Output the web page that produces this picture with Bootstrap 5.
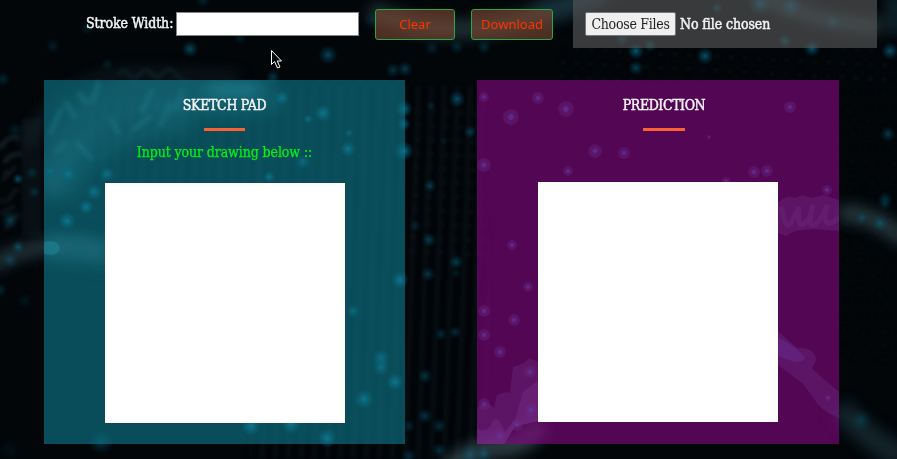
<!DOCTYPE html>
<html lang="en">
<head>
<meta charset="utf-8">
<meta name="viewport" content="width=device-width, initial-scale=1">
<title>Sketch Pad</title>
<link href="https://cdn.jsdelivr.net/npm/bootstrap@5.3.0/dist/css/bootstrap.min.css" rel="stylesheet">
<style>
body{background:#020609;color:#fff;font-family:"DejaVu Serif Condensed","DejaVu Serif",serif;font-stretch:condensed;font-size:14px;height:459px;overflow:hidden}
.backdrop{position:fixed;inset:0;z-index:-1}
.toolbar{height:48px;padding-left:86px}
.stroke-label,.file-name,.panel-title{color:#f4f4f4;-webkit-text-stroke:.45px currentColor}
.stroke-label{width:90px;white-space:nowrap;letter-spacing:-.1px;line-height:18px;padding-bottom:2px}
.stroke-input{width:183px;height:24px;border:1px solid #858585;background:#fff;padding:0 4px}
.tool-btn{height:31px;border:1px solid #28a745;border-radius:3px;background:rgba(128,74,50,.6);color:#ff3500;font:13px/1 "Noto Sans",sans-serif;padding:0}
.tool-btn:hover{border-color:#28a745;color:#ff3500}
.clear-btn{width:80px;margin-left:16px}
.download-btn{width:82px;margin-left:16px}
.upload-box{width:304px;height:48px;margin-left:20px;padding-left:12px;background:rgba(85,85,85,.66)}
.choose-btn{width:91px;height:24px;border:1px solid #777;border-radius:2px;background:#efefef;color:#222;padding:0;letter-spacing:-.28px;line-height:20px;white-space:nowrap}
.file-name{letter-spacing:-.1px;margin-left:4px}
.panels{padding:32px 0 0 44px;gap:72px}
.panel{height:364px;padding-top:16px}
.sketch{width:361px;background:rgba(14,115,133,.65)}
.predict{width:362px;background:rgba(126,6,125,.65)}
.panel-title{font-size:14px;line-height:18px;margin:0;font-weight:400;letter-spacing:-.32px}
.predict .panel-title{letter-spacing:-.42px}
.rule{width:41px;height:3px;margin-top:14px;background:#fa6135}
.predict .rule{width:42px}
.predict-heading{margin-left:12px}
.hint{height:18px;line-height:18px;margin-top:12px;color:#00f315;letter-spacing:-.1px;white-space:nowrap;-webkit-text-stroke:.25px currentColor}
.pad{display:block;width:240px;height:240px;background:#fff;margin-top:22px}
.predict .pad{margin-top:51px}
.pointer{position:absolute;left:271px;top:49px}
</style>
<script src="https://cdn.jsdelivr.net/npm/bootstrap@5.3.0/dist/js/bootstrap.bundle.min.js"></script>
</head>
<body>
<svg class="backdrop" width="897" height="459" viewBox="0 0 897 459" aria-hidden="true">
  <defs>
    <radialGradient id="glow"><stop offset="0" stop-color="#087c9d"/><stop offset=".4" stop-color="#075b77" stop-opacity=".7"/><stop offset="1" stop-color="#05455c" stop-opacity="0"/></radialGradient>
    <radialGradient id="violet"><stop offset="0" stop-color="#40a0ee"/><stop offset=".34" stop-color="#3680c5" stop-opacity=".9"/><stop offset=".4" stop-color="#4079a0" stop-opacity=".55"/><stop offset="1" stop-color="#40658a" stop-opacity=".45"/></radialGradient>
    <pattern id="mesh" width="14" height="14" patternUnits="userSpaceOnUse" patternTransform="rotate(3)"><circle cx="5" cy="5" r="2.5" fill="#324852" opacity=".13"/></pattern>
    <pattern id="strands" width="13" height="160" patternUnits="userSpaceOnUse" patternTransform="rotate(2)"><path d="M5 0v160" stroke="#45626f" stroke-width="4" opacity=".09"/></pattern>
    <filter id="soft" x="-20%" y="-20%" width="140%" height="140%"><feGaussianBlur stdDeviation="7"/></filter>
    <filter id="fine"><feGaussianBlur stdDeviation="2"/></filter>
    <clipPath id="leftHalf"><path d="M44 80h361v364H44z"/></clipPath>
    <clipPath id="rightHalf"><path d="M477 80h362v364H477z"/></clipPath>
  </defs>
  <g filter="url(#fine)">
    <rect x="405" y="110" width="80" height="150" fill="url(#mesh)"/>
    <rect x="560" y="48" width="337" height="34" fill="url(#mesh)"/>
    <rect x="839" y="70" width="58" height="300" fill="url(#mesh)" opacity=".5"/>
    <rect x="250" y="85" width="240" height="374" fill="url(#strands)"/>
    <rect x="90" y="95" width="170" height="90" fill="url(#strands)"/>
  </g>
  <g clip-path="url(#leftHalf)"><g filter="url(#soft)" fill="none">
    <path d="M40 195Q80 85 160 94T275 90" stroke="#3b7585" stroke-width="38" opacity=".38"/>
    <path d="M60 195Q85 125 190 115" stroke="#347080" stroke-width="34" opacity=".3"/>
    <path d="M45 248Q80 247 110 256" stroke="#3b7887" stroke-width="28" opacity=".4"/>
    <path d="M207 89h50" stroke="#4ba9b5" stroke-width="12" opacity=".7"/>
  </g></g>
  <g filter="url(#soft)" fill="none" opacity=".6">
    <path d="M25 145Q65 70 150 74T240 80" stroke="#395763" stroke-width="16" opacity=".3"/>
    <path d="M-10 266Q40 236 105 250" stroke="#5a8592" stroke-width="15" opacity=".6"/>
    <path d="M370 10Q450 45 535 16T615-12" stroke="#5f8793" stroke-width="18" opacity=".55"/>
    <path d="M535 13Q570 6 600-6" stroke="#215064" stroke-width="26" opacity=".7"/>
    <path d="M755-8Q810 24 880 26" stroke="#66929d" stroke-width="13" opacity=".7"/>
    <path d="M895-5v38" stroke="#214a5b" stroke-width="16" opacity=".8"/>
    <path d="M445 472Q475 447 500 447T542 423" stroke="#668b96" stroke-width="20" opacity=".7"/>
    <path d="M839 213Q874 213 905 240" stroke="#5d8388" stroke-width="18" opacity=".65"/>
    <path d="M839 406Q862 436 905 459" stroke="#244550" stroke-width="24" opacity=".8"/>
  </g>
  <g clip-path="url(#rightHalf)">
    <g fill="#5f89a5" opacity=".32">
      <path d="M778 203q9-9 17-5l8-3 8 3 13-3 15 5v31l-24-2-20 2-9 5-8-3z"/>
      <path d="M778 331l19 17q18-1 19 12l-4 9 27 23v26q-19-7-26-21l-11-14-24-18z"/>
      <path d="M477 444v-36q10-10 17 1l3-14q8-4 13-2l3-26q12-3 16-9l9 4v59l-23 5-10 18z"/>
    </g>
    <path d="M477 444v-15q10 5 15-6t13 9l10-12 8-28 15-11v40l-23 6-12 17z" fill="#8598bd" opacity=".3"/>
    <g fill="none" stroke="#7c99b5" stroke-width="5" opacity=".22"><path d="M781 207q5 23 9 17t9-17q-2 22 5 17t9-19q-6 23 1 20t13-20q-7 28 12 13"/></g>
    <path d="M778 338q14 5 27 19-3 7-13 4l-14-5z" fill="#4590e0" opacity=".35"/>
  </g>
  <g filter="url(#fine)" fill="none" stroke="#387a8a" opacity=".6">
    <path d="M49 135l13-27M55 153l12-11M64 101l12 17M78 92l10 13M99 82l-7 21M76 142l16 17M111 118l8 17M132 130l20-14M153 89l-12 24M170 103l-10 24M183 89l-8 22" stroke-width="6" opacity=".75"/>
    <path d="M118 75q6-9 11 0t11-1q6-8 12 0t12-2q6-7 13 3t14 5" stroke-width="3" opacity=".3"/>
    <path d="M0 149q8-16 19-10M4 163q7-11 18-9" stroke="#526f79" stroke-width="3" opacity=".6"/>
    <path d="M2 181l14-15M7 202l10-14M0 214l15-8M5 230l9-14M4 171l4 5M16 213l3 5M0 199l4 4" stroke="#526f79" stroke-width="3" opacity=".4"/>
    <path d="M32 118v118" stroke="#344652" stroke-width="20" opacity=".28"/>
  </g>
  <ellipse cx="50" cy="248" rx="10" ry="7" fill="#42b6c3" opacity=".5" clip-path="url(#leftHalf)"/>
  <g id="lights"></g>
</svg>

<header class="toolbar d-flex align-items-center">
  <label class="stroke-label" for="stroke">Stroke Width:</label>
  <input class="stroke-input" id="stroke" type="text">
  <button class="btn tool-btn clear-btn" type="button">Clear</button>
  <button class="btn tool-btn download-btn" type="button">Download</button>
  <div class="upload-box d-flex align-items-center">
    <button class="choose-btn" type="button">Choose Files</button>
    <span class="file-name">No file chosen</span>
  </div>
</header>
<main class="panels d-flex">
  <section class="panel sketch d-flex flex-column align-items-center">
    <h1 class="panel-title">SKETCH PAD</h1><div class="rule"></div>
    <div class="hint">Input your drawing below ::</div>
    <canvas class="pad" width="240" height="240"></canvas>
  </section>
  <section class="panel predict d-flex flex-column align-items-center">
    <div class="predict-heading d-flex flex-column align-items-center"><h2 class="panel-title">PREDICTION</h2><div class="rule"></div></div>
    <canvas class="pad" width="240" height="240"></canvas>
  </section>
</main>
<svg class="pointer" width="13" height="21" viewBox="0 0 13 21"><path d="M.5 1.5v14l3-3 3 6.5 2.5-1-2.8-6h4.3z" fill="#05090b" stroke="#fff"/></svg>
<script>
// x, y, radius, strength
const lights = [[53,46,8,.3],[107,64,7,.3],[190,49,9,.8],[273,77,8,.6],[240,38,7,.3],[203,0,8,.4],[87,28,8,.3],[3,79,8,.4],[15,130,9,.3],[328,55,10,.8],[372,20,9,.3],[393,70,8,.55],[405,69,8,.65],[432,48,8,.4],[457,47,8,.4],[484,47,8,.45],[457,99,9,.85],[431,106,6,.35],[470,132,7,.65],[443,141,5,.2],
[323,113,9,1],[308,119,5,.8],[282,98,8,.9],[348,149,8,1],[349,133,5,.6],[404,109,9,.8],[404,124,7,.7],[404,151,10,.9],[622,39,8,.7],[636,51,9,1],[636,68,8,.7],[650,45,7,.9],[705,56,9,.9],[785,41,8,.9],[812,48,9,1],[890,51,9,.9],[888,134,8,.65],[717,8,7,.8],[760,4,13,1],[791,6,13,1],[833,22,9,.8],
[18,179,6,.9],[18,247,7,.8],[10,260,9,.5],[32,173,7,.4],[34,192,7,.4],[10,220,10,.6],[25,301,9,.2],[0,290,8,.4],[50,171,7,.7],[68,174,9,1],[107,174,8,.9],[94,192,9,.9],[86,207,8,1],[67,221,9,1],[10,450,13,.15],[101,442,13,.4],[251,426,10,1],[291,424,10,1],[269,177,6,.9],[303,162,8,.7],
[430,186,7,.65],[415,226,7,.35],[429,240,8,.65],[428,274,8,.6],[456,262,8,.7],[456,273,6,.3],[441,334,7,.5],[455,332,7,.5],[425,376,8,.6],[425,416,8,.6],[439,426,8,.5],[409,426,7,.4],[439,450,8,.5],[409,456,8,.5],[364,399,10,1],[395,382,9,1],[381,358,9,.8],[381,367,9,.8],[400,280,9,1],[327,438,10,1],[353,311,7,.7],[470,455,12,.5],[484,454,9,.6],[885,199,8,.5],[885,204,7,.4],[862,218,7,.6],[880,223,9,.7],[861,420,12,.45]];
const violets = [[484,97,5],[511,117,8],[538,98,6],[566,109,8],[595,151,7],[624,153,6],[484,165,7],[568,171,5],[790,107,6],[709,137,2],[754,172,6],[767,171,6],[726,181,4],[827,190,5],[512,245,5],[528,287,5],[484,311,6],[484,335,6],[514,320,6],[500,352,6],[530,372,6],[484,404,6],[531,410,7],[517,425,6],[500,436,6],[828,398,3]];
const layer = document.getElementById("lights");
function light(x, y, r, strength, fill) {
  const dot = document.createElementNS("http://www.w3.org/2000/svg", "circle");
  Object.entries({cx: x, cy: y, r, opacity: strength, fill}).forEach(([k, v]) => dot.setAttribute(k, v));
  layer.append(dot);
}
lights.forEach(([x, y, r, s]) => light(x, y, r, s * (x > 44 && x < 405 && y > 80 && y < 444 ? 1 : .68), "url(#glow)"));
violets.forEach(([x, y, r]) => light(x, y, r, .75, "url(#violet)"));
</script>
</body>
</html>
